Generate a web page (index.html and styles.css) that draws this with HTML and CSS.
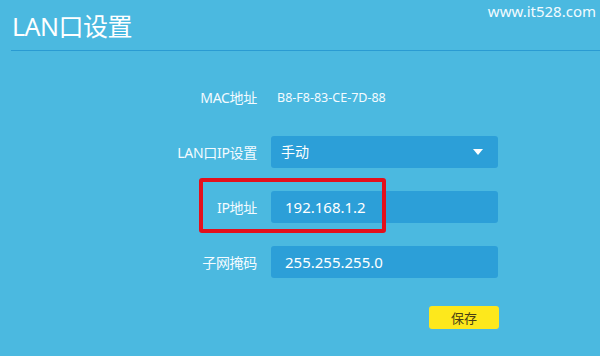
FILE: index.html
```html
<!DOCTYPE html>
<html lang="zh-CN">
<head>
  <meta charset="UTF-8" />
  <title>LAN口设置</title>
  <link rel="stylesheet" href="styles.css">
</head>
<body>
  <div class="page">
    <!-- Titolo + watermark -->
    <div class="page-head">
      <h1 class="page-title">LAN口设置</h1>
      <span class="watermark">www.it528.com</span>
    </div>

    <div class="form">
      <div class="form-row">
        <label class="form-label">MAC地址</label>
        <div class="form-text">B8-F8-83-CE-7D-88</div>
      </div>
      <div class="form-row">
        <label class="form-label">LAN口IP设置</label>
        <div class="form-field form-select">
          <span>手动</span>
          <span class="caret"></span>
        </div>
      </div>
      <div class="form-row">
        <label class="form-label">IP地址</label>
        <div class="form-field">192.168.1.2</div>
        <div class="mark-box"></div>
      </div>
      <div class="form-row">
        <label class="form-label">子网掩码</label>
        <div class="form-field">255.255.255.0</div>
      </div>
      <div class="form-actions">
        <button class="btn-save">保存</button>
      </div>
    </div>
  </div>
</body>
</html>
```

FILE: styles.css
```css
/* ---------- RESET ---------- */
* {
  margin: 0;
  padding: 0;
  box-sizing: border-box;
}
body {
  font-family: "Noto Sans", "Noto Sans CJK SC", sans-serif;
  background: #4bb9e0;
  color: #fff;
  width: 600px;
  height: 356px;
  overflow: hidden;
}
.page {
  position: relative;
  height: 100%;
}
/* ---------- HEADER ---------- */
.page-head {
  margin-left: 11px;
  height: 51px;
  padding: 10px 0 0 1px;
  border-bottom: 1px solid #2a9bd2;
}
.page-title {
  font-size: 25px;
  font-weight: normal;
  line-height: 33px;
  letter-spacing: -0.5px;
}
.watermark {
  position: absolute;
  top: 1px;
  right: 4px;
  font-size: 15px;
  color: #f2fbff;
}
/* ---------- FORM ---------- */
.form {
  margin-top: 30px;
  display: flex;
  flex-direction: column;
  gap: 23px;
}
.form-row {
  position: relative;
  display: flex;
  align-items: center;
  height: 32px;
}
.form-label {
  width: 257px;
  text-align: right;
  font-size: 14px;
  color: #f4fbff;
  letter-spacing: -0.3px;
}
.form-text {
  margin-left: 20px;
  font-size: 12.5px;
  color: #f4fbff;
}
.form-field {
  margin-left: 14px;
  width: 227px;
  height: 32px;
  line-height: 32px;
  padding-left: 14px;
  background: #2c9fd8;
  border-radius: 3px;
  font-size: 15px;
}
.form-select {
  display: flex;
  justify-content: space-between;
  align-items: center;
  padding: 0 15px 0 10px;
  font-size: 14px;
}
.caret {
  width: 0;
  height: 0;
  border-left: 5px solid transparent;
  border-right: 5px solid transparent;
  border-top: 6px solid #fff;
}
/* riquadro rosso di evidenziazione */
.mark-box {
  position: absolute;
  left: 199px;
  top: -13px;
  width: 187px;
  height: 55px;
  border: 4px solid #e3101c;
  border-radius: 3px;
}
/* ---------- BOTTONE ---------- */
.form-actions {
  margin-top: 5px;
  padding-left: 429px;
}
.btn-save {
  width: 70px;
  height: 23px;
  background: #fde81c;
  border: none;
  border-radius: 3px;
  font-family: inherit;
  font-size: 13px;
  color: #4a3f14;
}
```
